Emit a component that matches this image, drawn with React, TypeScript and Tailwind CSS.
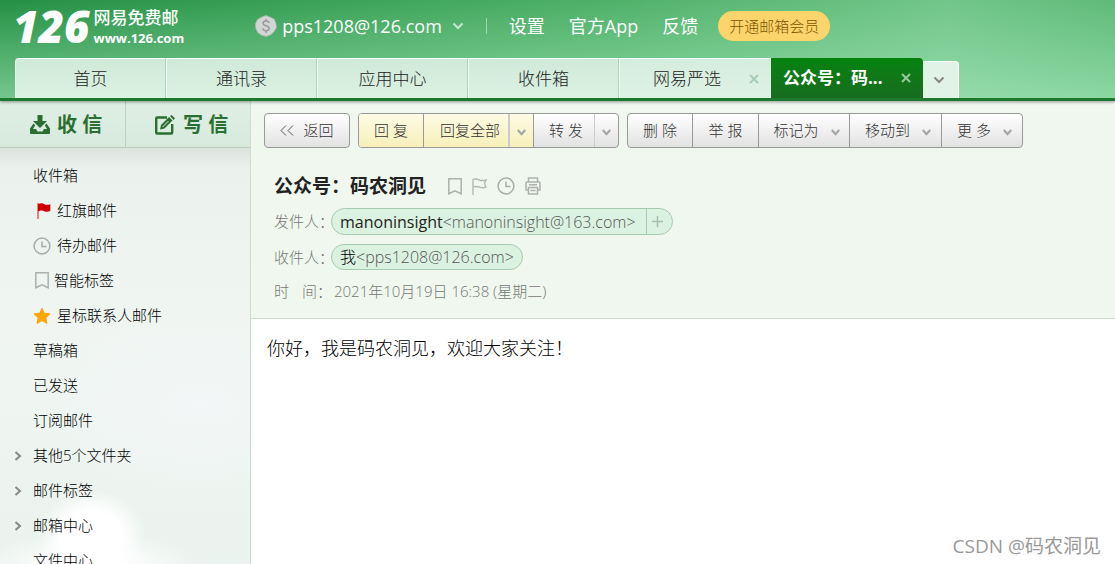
import type { ReactNode } from "react"
import clsx from "clsx"

type IconProps = { className?: string }

const ChevronDown = ({ className }: IconProps) => (
  <svg viewBox="0 0 12 8" className={clsx("h-2 w-3 shrink-0", className)} fill="none" stroke="currentColor" strokeWidth="2">
    <path d="M1.5 1.5 6 6l4.500-4.500" />
  </svg>
)

const ArrowDown = ({ className }: IconProps) => (
  <svg viewBox="0 0 9 7" className={clsx("h-[7px] w-[9px] shrink-0 text-[#a3a6a6]", className)} fill="none" stroke="currentColor" strokeWidth="2.200">
    <path d="M.8 1 4.500 5.200 8.200 1" />
  </svg>
)

const CloseIcon = ({ className }: IconProps) => (
  <svg viewBox="0 0 10 10" className={clsx("size-[10px]", className)} fill="none" stroke="currentColor" strokeWidth="2">
    <path d="m1 1 8 8M9 1 1 9" />
  </svg>
)

const CoinIcon = () => (
  <svg viewBox="0 0 22 22" className="size-[22px]">
    <path d="m11 .5 4.200 1.700 4.100 2 1.600 4.300.6 4-2.300 4-3.400 3.200-4.800 1.800-4.400-1.300-3.900-2.700-1.900-4.200-.3-4.700 2-4 4.200-2.500z" fill="#d3d5d4" stroke="#a9b8ad" strokeWidth=".8" />
    <path d="M14 8c-.2-1.500-1.500-2-3-2s-2.900.8-2.900 2.300c0 3.400 6 1.700 6 5 0 1.700-1.500 2.500-3.100 2.500-1.700 0-3-.8-3.200-2.400M11 4v2.500M11 15.500V18" fill="none" stroke="#989b99" strokeWidth="1.500" />
  </svg>
)

const InboxIcon = () => (
  <svg viewBox="0 0 20 20" className="size-5" fill="#2a6f31">
    <path d="M7.500 0h5v6H17l-7 7-7-7h4.500z" />
    <path d="M3.500 8.500 0 13.500v4.500q0 1 1 1h18q1 0 1-1v-4.500l-3.500-5-1.700 1.700 2.200 3.800h-3l-1.500 2.500h-5L6 14H3l2.200-3.800z" />
  </svg>
)

const ComposeIcon = () => (
  <svg viewBox="0 0 20 20" className="size-5" fill="none" stroke="#2a6f31">
    <path d="M12 2.500H2.200q-1 0-1 1v14q0 1 1 1h14q1 0 1-1V9" strokeWidth="2.400" />
    <path d="m5 14.500 1-4.500 8-8 3.500 3.500-8 8z" fill="#2a6f31" stroke="none" />
    <path d="m15 1 1.500-1L20 3.300 18.500 5z" fill="#2a6f31" stroke="none" />
    <path d="m7.500 12 6-6" stroke="#d9ebdf" strokeWidth="1" />
  </svg>
)

const FlagFilled = () => (
  <svg viewBox="0 0 14 16" className="ml-1 mr-[6px] h-4 w-[14px]">
    <path d="M1 0v16" stroke="#dd5b5b" strokeWidth="1.500" />
    <path d="M1 1.200C4-.6 6 .3 7.500 1.200S11 2 13.300 1.200V8c-2.300 1-4 1-6 .2S4 7.300 1 8.500z" fill="#d00000" />
  </svg>
)

const ClockIcon = ({ className }: IconProps) => (
  <svg viewBox="0 0 18 18" className={clsx("size-[18px]", className)} fill="none" stroke="#a9abaa" strokeWidth="1.500">
    <circle cx="9" cy="9" r="7.900" />
    <path d="M9 4.500V9.500h4.500" />
  </svg>
)

const BookmarkIcon = ({ className }: IconProps) => (
  <svg viewBox="0 0 14 17" className={clsx("h-[17px] w-[14px]", className)} fill="none" stroke="#adb0ae" strokeWidth="1.500">
    <path d="M.8.8h12.400v15L7 12.800.8 15.800z" />
  </svg>
)

const StarIcon = () => (
  <svg viewBox="0 0 18 18" className="mr-[6px] size-[18px]" fill="#ffa500" stroke="#ffa500" strokeLinejoin="round">
    <path d="m9 1.200 2.300 5 5.700.7-4.200 3.800 1.100 5.700L9 13.600l-4.900 2.800 1.100-5.700L1 6.900l5.700-.7z" />
  </svg>
)

const FlagOutline = () => (
  <svg viewBox="0 0 15 17" className="h-[17px] w-[15px]" fill="none" stroke="#b4b8b5" strokeWidth="1.400">
    <path d="M1 17V1.500c2-.8 4-.8 6 .3s4 1 7 .2l-1.500 3.500L14 9c-2.500 1-4.500 1-6.500.2S4 8 1 9" />
  </svg>
)

const PrinterIcon = () => (
  <svg viewBox="0 0 16 18" className="h-[18px] w-4" fill="none" stroke="#adb0ae" strokeWidth="1.500">
    <path d="M3.500 5V1h9v4M3.500 13H1V6q0-1 1-1h12q1 0 1 1v7h-2.500M3.500 10.500h9V17h-9zM4 7.800h8M5.500 13.500h5" />
  </svg>
)

const tabs = ["首页", "通讯录", "应用中心", "收件箱"]

const Header = () => (
  <header className="relative z-10 border-b-[3px] border-[#1c7a30] bg-[linear-gradient(to_bottom,rgba(160,235,180,0),rgba(170,235,190,0.6)),linear-gradient(to_right,#249044,#4fb169_55%,#72c58a_85%,#5fba79)] shadow-[0_1px_3px_rgba(0,0,0,0.4)]">
    <div className="flex h-[58px] items-center pb-[6px] pl-[13px] text-[18px] text-white">
      <a href="#" className="flex items-center gap-1">
        <span className="font-['Open_Sans'] text-[44px] leading-[52px] font-extrabold italic">126</span>
        <span className="flex flex-col pt-[3px] font-bold">
          <span className="text-[17px] leading-5 font-medium">网易免费邮</span>
          <span className="text-[13px] leading-5">www.126.com</span>
        </span>
      </a>
      <div className="ml-[71px] flex items-center gap-[5px]">
        <CoinIcon />
        <button className="flex items-center gap-[10px]">
          pps1208@126.com
          <ChevronDown className="text-[#c4e7cd]" />
        </button>
      </div>
      <span className="ml-[22px] h-4 w-px bg-[#a0d5ad]" />
      <nav className="ml-[22px] flex items-center gap-6">
        <a href="#">设置</a>
        <a href="#">官方App</a>
        <a href="#">反馈</a>
      </nav>
      <button className="ml-5 h-[30px] rounded-full bg-[#fbd56c] px-[11px] text-[15px] font-light text-[#7d5200]">开通邮箱会员</button>
    </div>
    <div className="flex h-10 items-end pl-[15px] text-[17px] font-light text-[#222]">
      {tabs.map((tab) => (
        <button key={tab} className="h-10 w-[151px] border-t border-r border-l border-t-white border-r-[#a9d8b5] border-l-[#f1faf3] bg-linear-to-b from-[#d0e9d8] to-[#dcf2e3] first:rounded-tl">{tab}</button>
      ))}
      <div className="flex h-10 w-[152px] items-center border-t border-l border-t-white border-l-[#f1faf3] bg-linear-to-b from-[#d6ecdd] to-[#def3e5] pl-[33px]">
        <button>网易严选</button>
        <button aria-label="关闭" className="ml-7 text-[#aacdb5]"><CloseIcon /></button>
      </div>
      <div className="flex h-10 w-[152px] items-center rounded-tr bg-linear-to-b from-[#04830d] to-[#176c1f] pl-3 font-bold text-white">
        <button>公众号：码...</button>
        <button aria-label="关闭" className="ml-[18px] text-[#97c99b]"><CloseIcon /></button>
      </div>
      <button aria-label="更多标签" className="flex h-[37px] w-9 items-center justify-center rounded-tr border-t border-r border-white bg-[#e0f3e6] pr-1">
        <ChevronDown className="text-[#888]" />
      </button>
    </div>
  </header>
)

type Folder = { name: string; icon?: ReactNode; expandable?: boolean }

const folders: Folder[] = [
  { name: "收件箱" },
  { name: "红旗邮件", icon: <FlagFilled /> },
  { name: "待办邮件", icon: <ClockIcon className="mr-[6px]" /> },
  { name: "智能标签", icon: <BookmarkIcon className="mr-[5px] ml-[2px]" /> },
  { name: "星标联系人邮件", icon: <StarIcon /> },
  { name: "草稿箱" },
  { name: "已发送" },
  { name: "订阅邮件" },
  { name: "其他5个文件夹", expandable: true },
  { name: "邮件标签", expandable: true },
  { name: "邮箱中心", expandable: true },
  { name: "文件中心" },
]

const Sidebar = () => (
  <aside className="w-[251px] shrink-0 overflow-hidden border-r border-[#c9dccd] bg-[radial-gradient(ellipse_54px_46px_at_92px_94%,#fff_55%,transparent),radial-gradient(ellipse_110px_32px_at_90px_100%,#fff_20%,transparent),radial-gradient(ellipse_160px_90px_at_200px_66%,#f3f7f7,transparent),linear-gradient(to_bottom,#e9f1ec,#f0f5f2_50%,#ebf3ee)]">
    <div className="flex h-[47px] border-b border-[#b3cfbc] bg-linear-to-b from-[#e0efe5] to-[#d7eadd] text-[20px] font-bold text-[#2a6f31]">
      <button className="flex w-[126px] items-center gap-[7px] border-r border-[#b9d2c1] pt-[2px] pl-[30px]">
        <InboxIcon />收 信
      </button>
      <button className="flex flex-1 items-center gap-2 pt-[2px] pl-[29px]">
        <ComposeIcon />写 信
      </button>
    </div>
    <ul className="bg-linear-to-b from-black/6 to-transparent to-5% pt-[10px] text-[15px] font-light text-black">
      {folders.map((folder) => (
        <li key={folder.name}>
          <a href="#" className="flex h-[35px] items-center">
            <span className="w-[33px] pl-[14px] text-[#888]">
              {folder.expandable && (
                <svg viewBox="0 0 8 10" className="h-[10px] w-2" fill="none" stroke="currentColor" strokeWidth="2">
                  <path d="m1.500 1 4.500 4-4.500 4" />
                </svg>
              )}
            </span>
            {folder.icon}
            {folder.name}
          </a>
        </li>
      ))}
    </ul>
  </aside>
)

const group = "flex h-[35px] overflow-hidden rounded-[4px] border border-[#999] bg-linear-to-b from-white to-[#e2e2e2]"
const yellow = "bg-linear-to-b from-[#fdfbe5] to-[#f7efb9]"

const Toolbar = () => (
  <div className="flex gap-2 text-[15px] font-light text-[#333]">
    <div className={group}>
      <button className="flex w-[84px] items-center justify-center gap-[9px]">
        <svg viewBox="0 0 14 11" className="h-[11px] w-[14px]" fill="none" stroke="#555">
          <path d="M6 .5 1 5.500l5 5M13 .5 8 5.500l5 5" />
        </svg>
        返回
      </button>
    </div>
    <div className={group}>
      <button className={clsx("w-[64px]", yellow)}>回 复</button>
      <button className={clsx("w-[85px] border-l border-[#999] pl-2", yellow)}>回复全部</button>
      <button aria-label="回复全部选项" className={clsx("flex w-[25px] items-center justify-center border-l-2 border-[#ccc] pt-1", yellow)}><ArrowDown /></button>
      <button className="w-[61px] border-l border-[#999] pl-1">转 发</button>
      <button aria-label="转发选项" className="flex w-6 items-center justify-center border-l border-[#ccc] pt-1"><ArrowDown /></button>
    </div>
    <div className={group}>
      <button className="w-[64px]">删 除</button>
      <button className="w-[66px] border-l border-[#999]">举 报</button>
      <button className="flex w-[91px] items-center justify-center gap-3 border-l border-[#999] pl-[5px]">标记为<ArrowDown className="mt-1" /></button>
      <button className="flex w-[92px] items-center justify-center gap-3 border-l border-[#999] pl-[5px]">移动到<ArrowDown className="mt-1" /></button>
      <button className="flex w-[81px] items-center justify-center gap-3 border-l border-[#999] pl-[5px]">更 多<ArrowDown className="mt-1" /></button>
    </div>
  </div>
)

const Mail = () => (
  <main className="flex min-w-0 flex-1 flex-col bg-white">
    <section className="border-b border-[#c8dccb] bg-[#f0f7ef] pt-3 pb-[14px] pl-[13px]">
      <Toolbar />
      <div className="pt-6 pl-[10px] text-[15px] font-light text-[#777]">
        <div className="flex h-7 items-center gap-[22px]">
          <h1 className="text-[19px] leading-7 font-bold text-[#222]">公众号：码农洞见</h1>
          <div className="flex items-center gap-[10px]">
            <button aria-label="标签"><BookmarkIcon /></button>
            <button aria-label="红旗"><FlagOutline /></button>
            <button aria-label="待办"><ClockIcon /></button>
            <button aria-label="打印"><PrinterIcon /></button>
          </div>
        </div>
        <div className="mt-2 flex h-[27px] items-center">
          <span className="w-[57px] whitespace-nowrap">发件人：</span>
          <span className="flex h-[27px] items-center rounded-full border border-[#a5cbaf] bg-[#dcf2e1] text-[16px] text-[#555]">
            <span className="pr-[10px] pl-2 leading-6"><span className="font-normal text-[#222]">manoninsight</span>&lt;manoninsight@163.com&gt;</span>
            <button aria-label="添加联系人" className="flex h-[25px] w-[26px] items-center justify-center border-l border-[#a5cbaf] pr-1">
              <svg viewBox="0 0 11 11" className="size-[11px]" stroke="#a3bfaa" strokeWidth="1.500"><path d="M5.500 0v11M0 5.500h11" /></svg>
            </button>
          </span>
        </div>
        <div className="mt-[9px] flex h-[26px] items-center">
          <span className="w-[57px] whitespace-nowrap">收件人：</span>
          <span className="flex h-[26px] items-center rounded-full border border-[#a5cbaf] bg-[#dcf2e1] px-2 text-[16px] text-[#555]">
            <span className="text-black">我</span>&lt;pps1208@126.com&gt;
          </span>
        </div>
        <div className="mt-2 flex h-[26px] items-center">
          <span className="flex w-[60px] gap-[13px] whitespace-nowrap"><span>时</span><span>间：</span></span>
          <span>2021年10月19日 16:38 (星期二)</span>
        </div>
      </div>
    </section>
    <article className="px-4 py-[15px] text-[18px] leading-7 font-light text-black">你好，我是码农洞见，欢迎大家关注！</article>
  </main>
)

export default function App() {
  return (
    <div className="relative flex h-screen flex-col overflow-hidden font-['Open_Sans','Noto_Sans_CJK_SC',sans-serif]">
      <Header />
      <div className="flex min-h-0 flex-1">
        <Sidebar />
        <Mail />
      </div>
      <span className="absolute right-[14px] bottom-1 text-[19px] text-[#999]">CSDN @码农洞见</span>
    </div>
  )
}
